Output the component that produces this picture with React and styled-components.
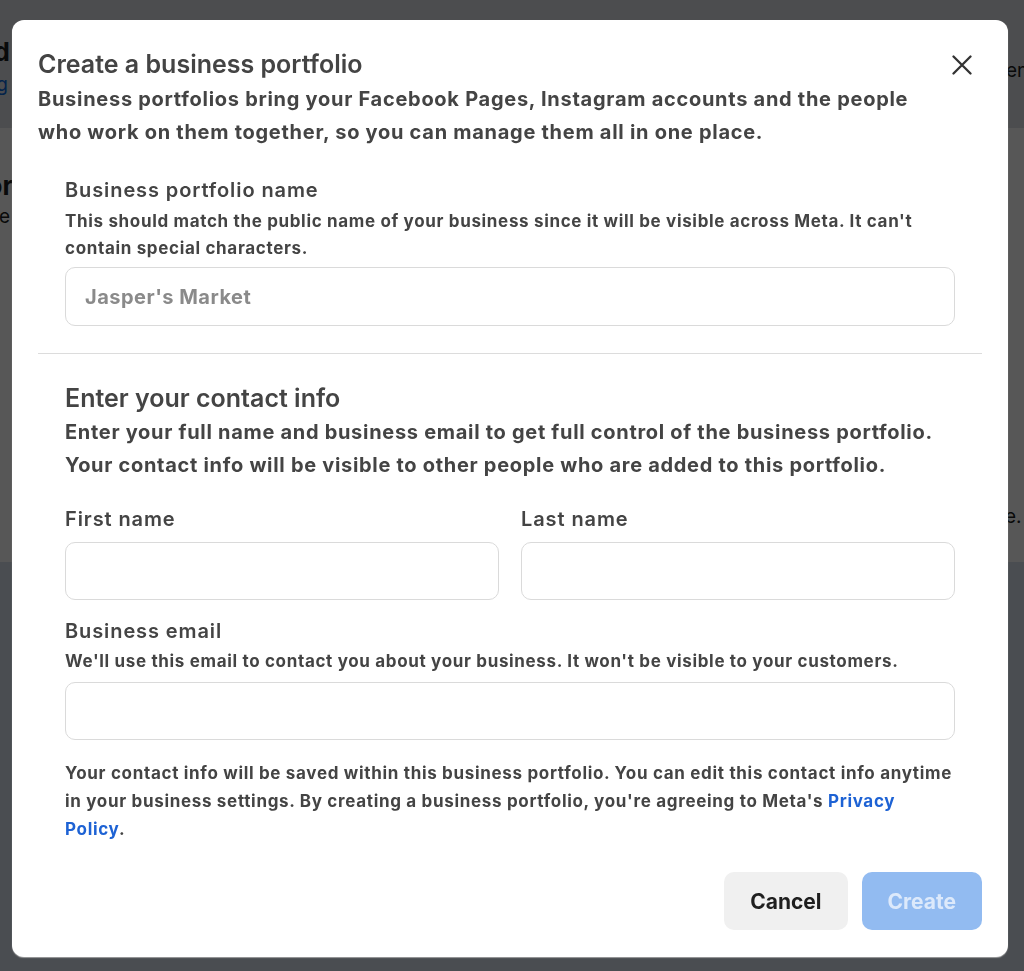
import React from "react";
import styled, { createGlobalStyle } from "styled-components";

const GlobalStyle = createGlobalStyle`
  html, body {
    margin: 0;
    padding: 0;
  }
  body {
    font-family: Inter, Roboto, "Noto Sans", "Liberation Sans", Arial, sans-serif;
    background: #ffffff;
    overflow: hidden;
  }
  *, *::before, *::after {
    box-sizing: border-box;
  }
`;

/* ---------- page behind the dialog ---------- */

const Page = styled.div`
  height: 971px;
  display: flex;
  flex-direction: column;
  background: #ffffff;
`;

const PageBand = styled.section`
  height: ${(p) => p.$height || "auto"};
  flex: ${(p) => (p.$grow ? 1 : "none")};
  background: ${(p) => p.$bg};
  display: flex;
  justify-content: space-between;
`;

const Gutter = styled.div`
  width: ${(p) => p.$width};
  overflow: hidden;
  display: flex;
  flex-direction: column;
  align-items: ${(p) => (p.$side === "left" ? "flex-end" : "flex-start")};
  padding-top: ${(p) => p.$top || "0px"};
  gap: ${(p) => p.$gap || "0px"};
  white-space: nowrap;
`;

const PageHeading = styled.div`
  font-size: 26px;
  line-height: 32px;
  font-weight: 700;
  color: #1c1e21;
  margin-right: ${(p) => p.$shift || "0px"};
`;

const PageLink = styled.div`
  font-size: 19px;
  line-height: 26px;
  color: #0a66d8;
  margin-right: ${(p) => p.$shift || "0px"};
`;

const PageText = styled.div`
  font-size: 19px;
  line-height: 26px;
  color: #1c1e21;
  margin-left: ${(p) => p.$shiftLeft || "0px"};
  margin-right: ${(p) => p.$shift || "0px"};
`;

/* ---------- dialog ---------- */

const Overlay = styled.div`
  position: fixed;
  inset: 0;
  background: rgba(0, 0, 0, 0.66);
  display: flex;
  justify-content: flex-start;
  align-items: flex-start;
  padding: 20px 0 0 12px;
`;

const Dialog = styled.div`
  width: 996px;
  background: #ffffff;
  border-radius: 12px;
  padding: 28px 26px 27px;
  display: flex;
  flex-direction: column;
  box-shadow: 0 1px 1px rgba(190, 190, 190, 0.7);
  color: #444444;
`;

const DialogHeader = styled.div`
  display: flex;
  align-items: flex-start;
  justify-content: space-between;
  gap: 12px;
`;

const HeaderText = styled.div`
  flex: 1;
  display: flex;
  flex-direction: column;
  gap: 3px;
`;

const Title = styled.h2`
  margin: 0;
  font-size: 25px;
  line-height: 32px;
  font-weight: 600;
  color: #444444;
`;

const Lead = styled.p`
  margin: 0;
  font-size: 20px;
  line-height: 33px;
  font-weight: 700;
  letter-spacing: 0.72px;
  color: #444444;
`;

const CloseButton = styled.button`
  flex: none;
  width: 40px;
  height: 40px;
  margin-top: -3px;
  padding: 0;
  border: 0;
  background: none;
  color: #333333;
  display: flex;
  align-items: center;
  justify-content: center;
  cursor: pointer;
`;

const Section = styled.div`
  padding: 0 27px;
  margin-top: ${(p) => p.$top};
  display: flex;
  flex-direction: column;
`;

const SectionHeading = styled.h3`
  margin: 0;
  font-size: 25px;
  line-height: 32px;
  font-weight: 600;
  color: #444444;
`;

const Label = styled.label`
  display: block;
  font-size: 20px;
  line-height: 28px;
  font-weight: 600;
  letter-spacing: 0.9px;
  color: #444444;
`;

const Hint = styled.p`
  margin: ${(p) => p.$top || "2px"} 0 0;
  font-size: ${(p) => (p.$large ? "20px" : "17px")};
  line-height: ${(p) => (p.$large ? "33px" : "27px")};
  font-weight: 700;
  letter-spacing: ${(p) => (p.$large ? "0.7px" : "0.66px")};
  color: #444444;
`;

const TextInput = styled.input`
  display: block;
  width: 100%;
  height: ${(p) => p.$height || "58px"};
  margin-top: ${(p) => p.$top || "5px"};
  padding: 0 19px;
  border: 1px solid #dadada;
  border-radius: 10px;
  background: #ffffff;
  font-family: inherit;
  font-size: 20px;
  font-weight: 700;
  letter-spacing: 0.5px;
  color: #444444;
  outline: none;

  &::placeholder {
    color: #8a8a8a;
    opacity: 1;
  }
`;

const Divider = styled.hr`
  margin: 27px 0 0;
  border: 0;
  border-top: 1px solid #dcdcdc;
  height: 0;
`;

const NameRow = styled.div`
  display: grid;
  grid-template-columns: 1fr 1fr;
  column-gap: 22px;
  margin-top: 23px;
`;

const Field = styled.div`
  display: flex;
  flex-direction: column;
  margin-top: ${(p) => p.$top || "0px"};
`;

const Note = styled.p`
  margin: 19px 0 0;
  padding: 0 27px;
  font-size: 17px;
  line-height: 28px;
  font-weight: 700;
  letter-spacing: 0.68px;
  color: #444444;
`;

const Link = styled.a`
  color: #1d62d4;
  text-decoration: none;
`;

const Actions = styled.div`
  display: flex;
  justify-content: flex-end;
  gap: 14px;
  margin-top: 29px;
`;

const Button = styled.button`
  height: 58px;
  padding: 0 26px;
  border: 0;
  border-radius: 10px;
  font-family: inherit;
  font-size: 21px;
  font-weight: 700;
  background: ${(p) => (p.$primary ? "#92bbf1" : "#f0f0f0")};
  color: ${(p) => (p.$primary ? "#dce9fb" : "#1f1f1f")};
  cursor: ${(p) => (p.$primary ? "default" : "pointer")};
`;

function CloseIcon() {
  return (
    <svg width="20" height="20" viewBox="0 0 20 20" fill="none" aria-hidden="true">
      <path d="M1.5 1.5 L18.5 18.5 M18.5 1.5 L1.5 18.5" stroke="currentColor" strokeWidth="2.3" strokeLinecap="round" />
    </svg>
  );
}

export default function App() {
  return (
    <>
      <GlobalStyle />
      <Page>
        <PageBand $height="128px" $bg="#dfe1e7">
          <Gutter $width="11px" $side="left" $top="36px" $gap="4px">
            <PageHeading $shift="1px">Get started</PageHeading>
            <PageLink $shift="3px">View billing</PageLink>
          </Gutter>
          <Gutter $width="16px" $side="right" $top="58px">
            <PageText $shiftLeft="-2px">enabled</PageText>
          </Gutter>
        </PageBand>
        <PageBand $height="434px" $bg="#ffffff">
          <Gutter $width="12px" $side="left" $top="42px" $gap="2px">
            <PageHeading $shift="-1px">Professional creator</PageHeading>
            <PageText $shift="2px">Manage your details here</PageText>
          </Gutter>
          <Gutter $width="16px" $side="right" $top="376px">
            <PageText $shiftLeft="-3px">e.</PageText>
          </Gutter>
        </PageBand>
        <PageBand $grow $bg="#dae2ee" />
      </Page>

      <Overlay>
        <Dialog role="dialog" aria-labelledby="portfolio-title">
          <DialogHeader>
            <HeaderText>
              <Title id="portfolio-title">Create a business portfolio</Title>
              <Lead>
                Business portfolios bring your Facebook Pages, Instagram accounts and the people
                who work on them together, so you can manage them all in one place.
              </Lead>
            </HeaderText>
            <CloseButton aria-label="Close">
              <CloseIcon />
            </CloseButton>
          </DialogHeader>

          <Section $top="27px">
            <Label htmlFor="portfolio-name">Business portfolio name</Label>
            <Hint $top="4px">
              This should match the public name of your business since it will be visible across
              Meta. It can't contain special characters.
            </Hint>
            <TextInput id="portfolio-name" placeholder="Jasper's Market" $height="59px" />
          </Section>

          <Divider />

          <Section $top="28px">
            <SectionHeading>Enter your contact info</SectionHeading>
            <Hint $large $top="2px">
              Enter your full name and business email to get full control of the business portfolio.
              Your contact info will be visible to other people who are added to this portfolio.
            </Hint>

            <NameRow>
              <Field>
                <Label htmlFor="first-name">First name</Label>
                <TextInput id="first-name" $top="9px" />
              </Field>
              <Field>
                <Label htmlFor="last-name">Last name</Label>
                <TextInput id="last-name" $top="9px" />
              </Field>
            </NameRow>

            <Field $top="17px">
              <Label htmlFor="business-email">Business email</Label>
              <Hint $top="3px">
                We'll use this email to contact you about your business. It won't be visible to your
                customers.
              </Hint>
              <TextInput id="business-email" type="email" $top="7px" />
            </Field>
          </Section>

          <Note>
            Your contact info will be saved within this business portfolio. You can edit this
            contact info anytime in your business settings. By creating a business portfolio,
            you're agreeing to Meta's <Link href="#privacy">Privacy Policy</Link>.
          </Note>

          <Actions>
            <Button type="button">Cancel</Button>
            <Button type="button" $primary disabled>
              Create
            </Button>
          </Actions>
        </Dialog>
      </Overlay>
    </>
  );
}
